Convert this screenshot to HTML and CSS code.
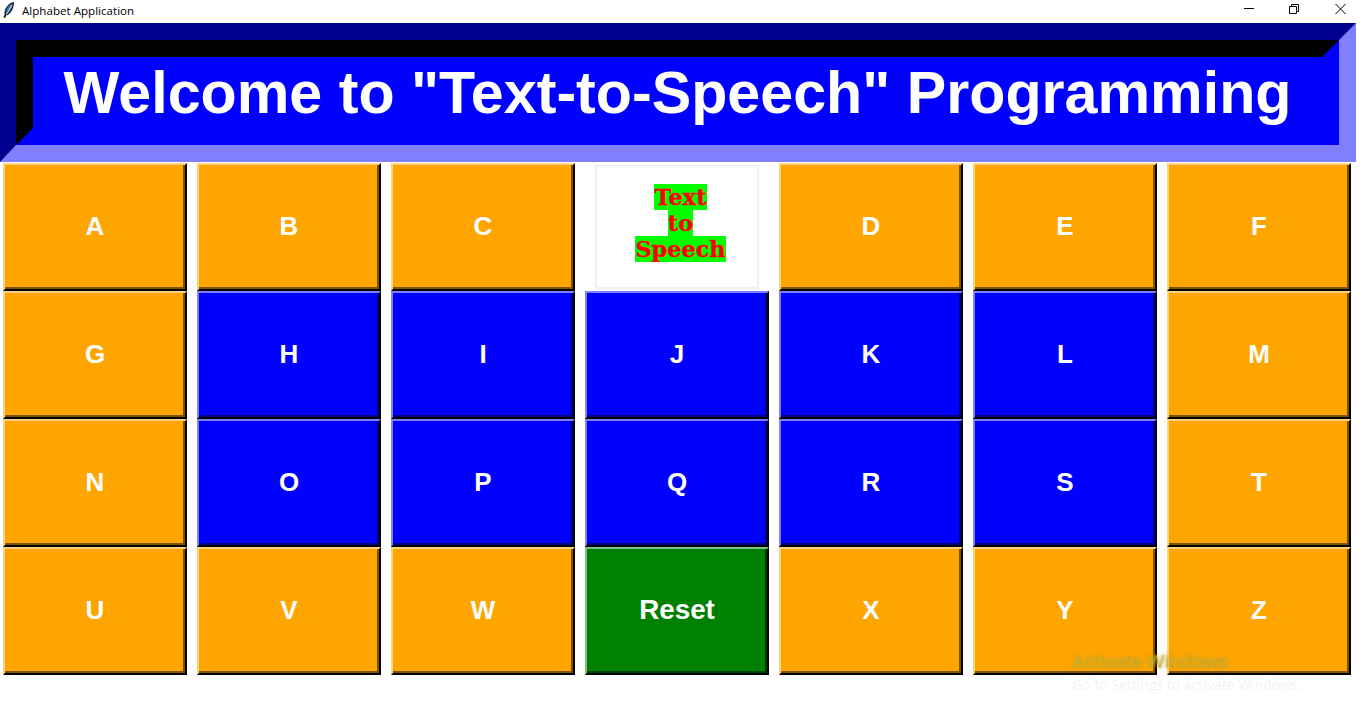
FILE: index.html
```html
<!DOCTYPE html>
<html lang="en">
<head>
<meta charset="utf-8">
<title>Alphabet Application</title>
<link rel="stylesheet" href="styles.css">
</head>
<body>
<div class="titlebar">
  <svg class="app-icon" width="12" height="16" viewBox="0 0 12 16"><path d="M10.500 .8C7 1.200 3.600 4.600 2.400 9c-.4 1.600-.4 2.800-.2 3.600L1.200 15l.6.300 1-2.300c2.800-.6 5.200-3.400 6.600-7 .6-1.800 1-3.600 1.100-5.200z" fill="#3f74a6" stroke="#050c14" stroke-width="1.100"/><path d="M9 3 3.500 12.500" stroke="#e8eff6" stroke-width=".8" fill="none"/></svg>
  <span class="app-title">Alphabet Application</span>
  <div class="controls">
    <svg class="ctl-min" width="10" height="10" viewBox="0 0 10 10"><path d="M0 4.500h10" stroke="#000" fill="none"/></svg>
    <svg class="ctl-restore" width="10" height="10" viewBox="0 0 10 10"><path d="M.5 2.500h7v7h-7zM2.500 2.500v-2h7v7h-2" stroke="#000" fill="none"/></svg>
    <svg class="ctl-close" width="11" height="10" viewBox="0 0 11 10"><path d="M.5 0l10 10M10.500 0l-10 10" stroke="#000" fill="none"/></svg>
  </div>
</div>
<header class="banner">
  <div class="banner-inner"><h1 class="banner-text">Welcome to "Text-to-Speech" Programming</h1></div>
</header>
<main class="board">
  <button class="key orange">A</button>
  <button class="key orange">B</button>
  <button class="key orange">C</button>
  <div class="logo-cell"><div class="logo">
    <span class="logo-line">Text</span>
    <span class="logo-line">to</span>
    <span class="logo-line">Speech</span>
  </div></div>
  <button class="key orange">D</button>
  <button class="key orange">E</button>
  <button class="key orange">F</button>
  <button class="key orange">G</button>
  <button class="key blue">H</button>
  <button class="key blue">I</button>
  <button class="key blue">J</button>
  <button class="key blue">K</button>
  <button class="key blue">L</button>
  <button class="key orange">M</button>
  <button class="key orange">N</button>
  <button class="key blue">O</button>
  <button class="key blue">P</button>
  <button class="key blue">Q</button>
  <button class="key blue">R</button>
  <button class="key blue">S</button>
  <button class="key orange">T</button>
  <button class="key orange">U</button>
  <button class="key orange">V</button>
  <button class="key orange">W</button>
  <button class="key green reset">Reset</button>
  <button class="key orange">X</button>
  <button class="key orange">Y</button>
  <button class="key orange">Z</button>
</main>
<div class="watermark">
  <div class="wm-title">Activate Windows</div>
  <div class="wm-sub">Go to Settings to activate Windows.</div>
</div>
</body>
</html>
```
FILE: styles.css
```css
* { box-sizing: border-box; }
html, body { margin: 0; padding: 0; height: 100%; overflow: hidden; background: #fff; }
body { font-family: "Liberation Sans", Arial, sans-serif; position: relative; }

.titlebar { height: 23px; display: flex; align-items: center; padding-left: 3px; background: #fff; }
.app-icon { margin-right: 7px; margin-top: -3px; }
.app-title { font: 11.600px/16px "Open Sans", "Noto Sans", sans-serif; color: #000; margin-top: -1px; }
.controls { margin-left: auto; display: flex; align-items: center; padding-right: 19px; margin-top: -5px; }
.ctl-min { margin-right: 35px; }
.ctl-restore { margin-right: 36px; }

.banner {
  width: 1356px; height: 139px;
  border-style: solid; border-width: 17px 17px 17px 16px;
  border-color: #000090 #8080ff #8080ff #000090;
}
.banner-inner {
  height: 100%; display: flex; align-items: center; justify-content: center;
  background: #0000ff;
  border-style: solid; border-width: 17px;
  border-color: #000 #0000ff #0000ff #000;
}
.banner-text { margin: 0; font-size: 59.200px; line-height: 70px; font-weight: 700; color: #fff; white-space: nowrap; }

.board {
  display: grid; grid-template-columns: repeat(7, 184px); grid-auto-rows: 128px;
  column-gap: 10px; padding: 1px 0 0 3px;
}
.key {
  margin: 0; padding: 0 0 2px; border-style: solid; border-width: 2px;
  font: 700 26px "Liberation Sans", Arial, sans-serif; color: #fff;
  box-shadow: inset -2px -2px 0 var(--shade);
  border-color: var(--light) #000 #000 var(--light);
  background: var(--face);
}
.reset { font-size: 27.800px; }
.orange { --face: #ffa500; --light: #ffd27f; --shade: #805200; }
.blue { --face: #0000ff; --light: #8080ff; --shade: #000080; }
.green { --face: #008000; --light: #80c080; --shade: #004000; }

.logo-cell { padding: 2px 10px; }
.logo {
  height: 100%; border: 2px solid #f0f0f0; background: #fff;
  display: flex; flex-direction: column; align-items: center; padding: 17px 0 0 7px;
}
.logo-line {
  display: block; height: 26px; background: #00ff00; color: #ff0000;
  font: 700 22.400px/26px "DejaVu Serif", "Liberation Serif", serif;
  -webkit-text-stroke: .4px #ff0000; white-space: nowrap; overflow: hidden;
}

.watermark { position: absolute; left: 1072px; top: 651px; pointer-events: none; white-space: nowrap; }
.wm-title { font: 19px/20px "Open Sans", "Noto Sans", sans-serif; color: rgba(195,170,45,.55); text-shadow: 0 0 3px rgba(190,170,50,.9), 0 0 6px rgba(190,170,50,.6); }
.wm-sub { margin-top: 6px; font: 14px/16px "Open Sans", "Noto Sans", sans-serif; color: rgba(160,160,160,.16); }
```
